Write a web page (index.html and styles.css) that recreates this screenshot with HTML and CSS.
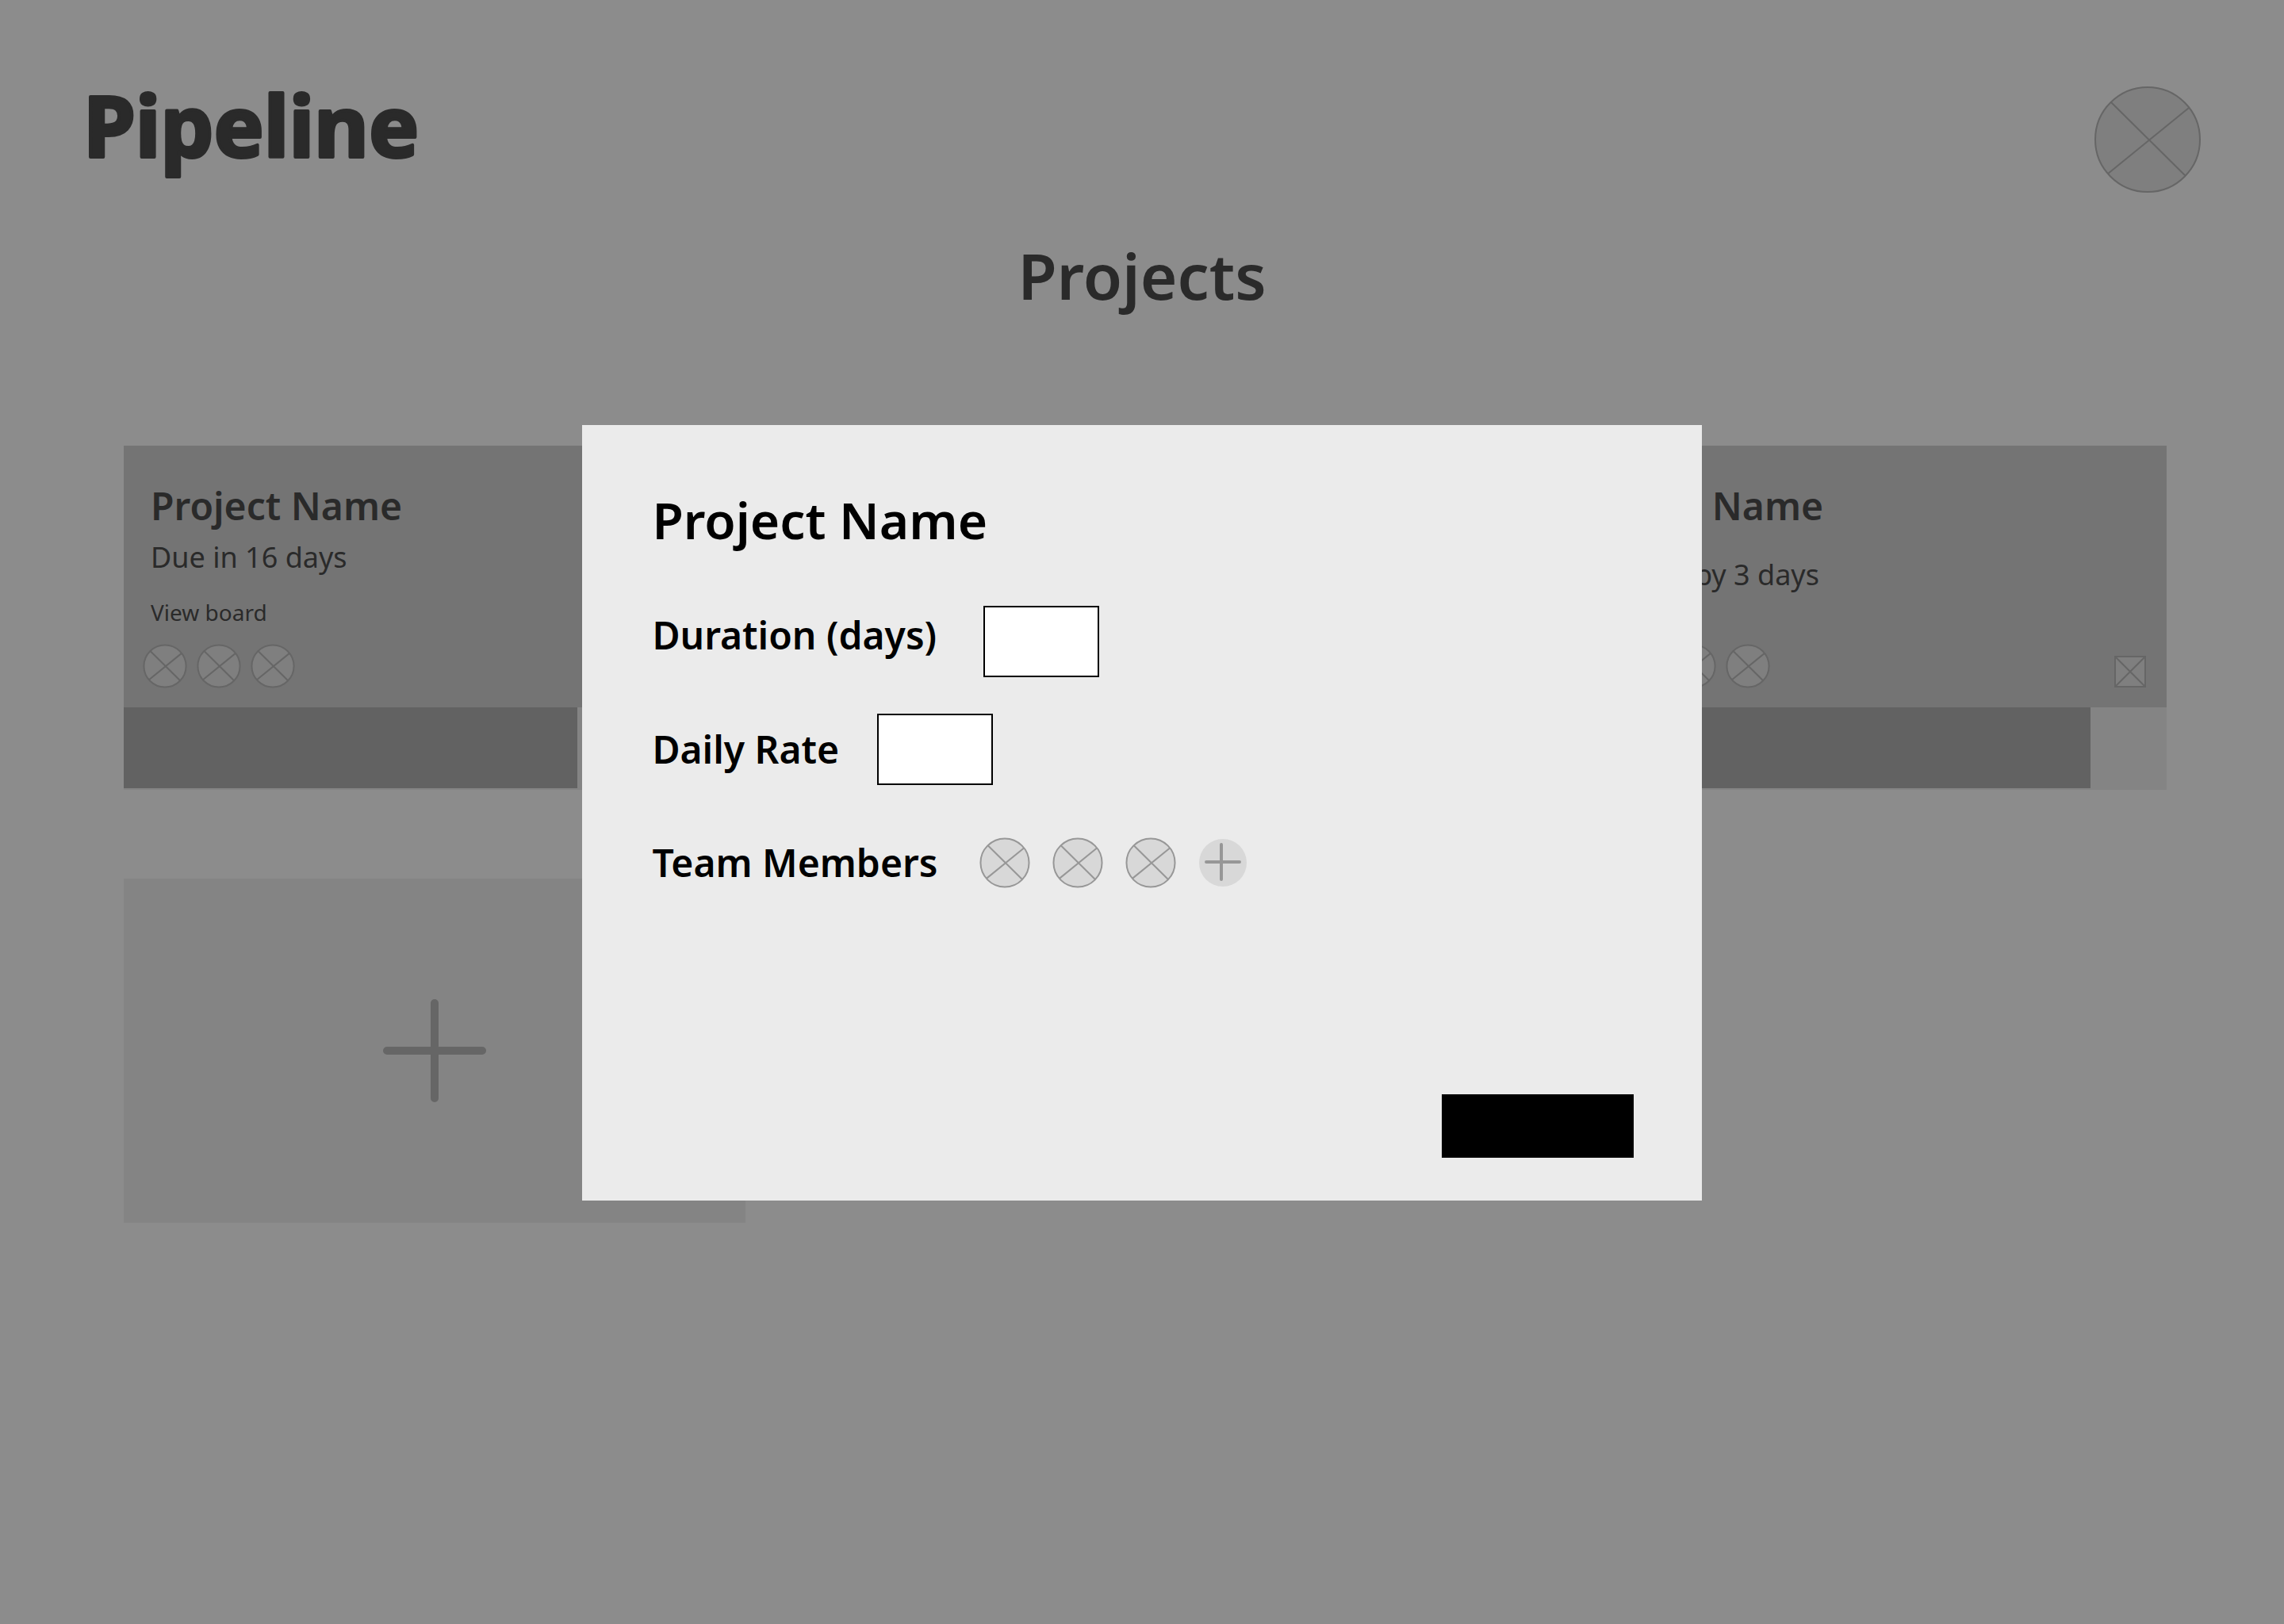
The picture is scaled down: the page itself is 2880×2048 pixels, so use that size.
FILE: index.html
```html
<!DOCTYPE html>
<html lang="en">
<head>
<meta charset="utf-8">
<title>Pipeline – Projects</title>
<link rel="stylesheet" href="styles.css">
</head>
<body>
<svg class="defs" aria-hidden="true">
  <symbol id="person" viewBox="0 0 134 134" overflow="visible">
    <circle cx="67" cy="67" r="66"/>
    <path d="M21 20 115 113M17 110 119 27"/>
  </symbol>
</svg>
<div class="page">
  <header class="topbar">
    <svg class="logo" role="img" aria-label="Pipeline"><text x="0" y="89">Pipeline</text></svg>
    <button class="account" type="button" aria-label="Account"><svg class="person"><use href="#person"/></svg></button>
  </header>
  <main>
    <h1 class="page-title">Projects</h1>
    <div class="projects">
      <article class="card">
        <div class="card-body">
          <h2 class="card-title">Project Name</h2>
          <p class="card-due">Due in 16 days</p>
          <a class="card-link" href="#board">View board</a>
          <div class="card-team">
            <svg class="person"><use href="#person"/></svg>
            <svg class="person"><use href="#person"/></svg>
            <svg class="person"><use href="#person"/></svg>
          </div>
        </div>
        <div class="progress"><div class="progress-fill" style="width:73%"></div></div>
      </article>
      <article class="card"></article>
      <article class="card">
        <div class="card-body">
          <h2 class="card-title">Project Name</h2>
          <p class="card-due card-late">Overdue by 3 days</p>
          <div class="card-team">
            <svg class="person"><use href="#person"/></svg>
            <svg class="person"><use href="#person"/></svg>
            <svg class="person"><use href="#person"/></svg>
            <svg class="person"><use href="#person"/></svg>
            <svg class="flag" viewBox="0 0 40 40"><path d="M1 1H39V39H1ZM1 1 39 39M39 1 1 39"/></svg>
          </div>
        </div>
        <div class="progress"><div class="progress-fill" style="width:87.8%"></div></div>
      </article>
      <button class="add-card" type="button" aria-label="Add project">
        <svg class="add-icon" viewBox="0 0 130 130"><path d="M65 5V125M5 65H125"/></svg>
      </button>
    </div>
  </main>
</div>
<div class="overlay">
  <form class="modal" role="dialog" aria-labelledby="modal-title">
    <h2 class="modal-title" id="modal-title">Project Name</h2>
    <div class="field field-top">
      <label class="label" for="duration">Duration (days)</label>
      <input class="input" id="duration" type="text">
    </div>
    <div class="field">
      <label class="label label-short" for="rate">Daily Rate</label>
      <input class="input" id="rate" type="text">
    </div>
    <div class="field field-team">
      <span class="label">Team Members</span>
      <div class="team">
        <svg class="person"><use href="#person"/></svg>
        <svg class="person"><use href="#person"/></svg>
        <svg class="person"><use href="#person"/></svg>
        <button class="add-member" type="button" aria-label="Add member">
          <svg class="add-member-icon" viewBox="0 0 60 60"><path d="M28 7V51M9 29H51"/></svg>
        </button>
      </div>
    </div>
    <button class="submit" type="submit" aria-label="Save"></button>
  </form>
</div>
</body>
</html>
```
FILE: styles.css
```css
* { box-sizing: border-box; }
body {
  margin: 0;
  background: #8c8c8c;
  color: #2a2a2a;
  font-family: "Noto Sans", "Open Sans", sans-serif;
}
h1, h2, p { margin: 0; font-weight: 600; }
button { border: 0; padding: 0; background: none; font: inherit; }
svg { display: block; fill: none; }
.defs { position: absolute; width: 0; height: 0; }

.person { fill: #7f7f7f; stroke: #666; stroke-width: 2px; overflow: visible; }
symbol circle, symbol path { vector-effect: non-scaling-stroke; }

.topbar {
  display: flex;
  justify-content: space-between;
  align-items: flex-start;
  padding: 109px 105px 0;
}
.logo {
  width: 440px;
  height: 134px;
  overflow: visible;
}
.logo text {
  font-family: "Noto Sans", sans-serif;
  font-size: 106px;
  font-weight: 700;
  fill: #2a2a2a;
  stroke: #2a2a2a;
  stroke-width: 4px;
  stroke-linejoin: round;
}
.account, .account .person { display: block; width: 134px; height: 134px; }

.page-title {
  margin-top: 50px;
  font-size: 80px;
  line-height: 108px;
  text-align: center;
}
.projects {
  display: grid;
  grid-template-columns: repeat(3, 1fr);
  grid-auto-rows: 434px;
  gap: 112px;
  padding: 161px 148px 0 156px;
}
.card { display: flex; flex-direction: column; background: #848484; }
.card-body {
  flex: 1;
  display: flex;
  flex-direction: column;
  padding: 44px 26px 25px 34px;
  background: #747474;
}
.card-title { font-size: 48px; line-height: 64px; }
.card-due { font-size: 36px; line-height: 66px; font-weight: 400; }
.card-late { margin-top: 22px; }
.card-link {
  margin-top: 16px;
  font-size: 28px;
  line-height: 40px;
  color: inherit;
  text-decoration: none;
}
.card-team {
  display: flex;
  align-items: flex-end;
  gap: 14px;
  margin-top: auto;
  margin-left: -9px;
}
.card-team .person { width: 54px; height: 54px; }
.flag {
  width: 40px;
  height: 40px;
  margin-left: auto;
  fill: #7f7f7f;
  stroke: #666;
  stroke-width: 2px;
}
.progress { height: 104px; padding-bottom: 2px; }
.progress-fill { height: 100%; background: #626262; }

.add-card {
  display: flex;
  align-items: center;
  justify-content: center;
  background: #848484;
}
.add-icon {
  width: 130px;
  height: 130px;
  stroke: #666;
  stroke-width: 10px;
  stroke-linecap: round;
}

.overlay {
  position: fixed;
  inset: 0;
  display: flex;
  align-items: center;
  justify-content: center;
  padding-top: 2px;
}
.modal {
  display: flex;
  flex-direction: column;
  width: 49%;
  padding: 76px 86px 54px 88px;
  background: #ebebeb;
  color: #000;
}
.modal-title { font-size: 64px; line-height: 88px; }
.field { display: flex; align-items: center; gap: 48px; margin-top: 46px; }
.field-top { align-items: flex-start; margin-top: 64px; }
.field-team { gap: 44px; margin-top: 61px; }
.label { min-width: 370px; font-size: 48px; line-height: 74px; font-weight: 600; }
.label-short { min-width: 236px; }
.input {
  width: 146px;
  height: 90px;
  padding: 0 16px;
  border: 2px solid #000;
  border-radius: 0;
  background: #fff;
  font: inherit;
  font-size: 48px;
}
.team { display: flex; align-items: center; gap: 30px; }
.team .person { width: 62px; height: 62px; fill: #d8d8d8; stroke: #979797; }
.add-member {
  width: 60px;
  height: 60px;
  border-radius: 50%;
  background: #d8d8d8;
}
.add-member-icon { stroke: #979797; stroke-width: 4px; stroke-linecap: round; }
.submit {
  align-self: flex-end;
  width: 242px;
  height: 80px;
  margin-top: 255px;
  background: #000;
}
```
